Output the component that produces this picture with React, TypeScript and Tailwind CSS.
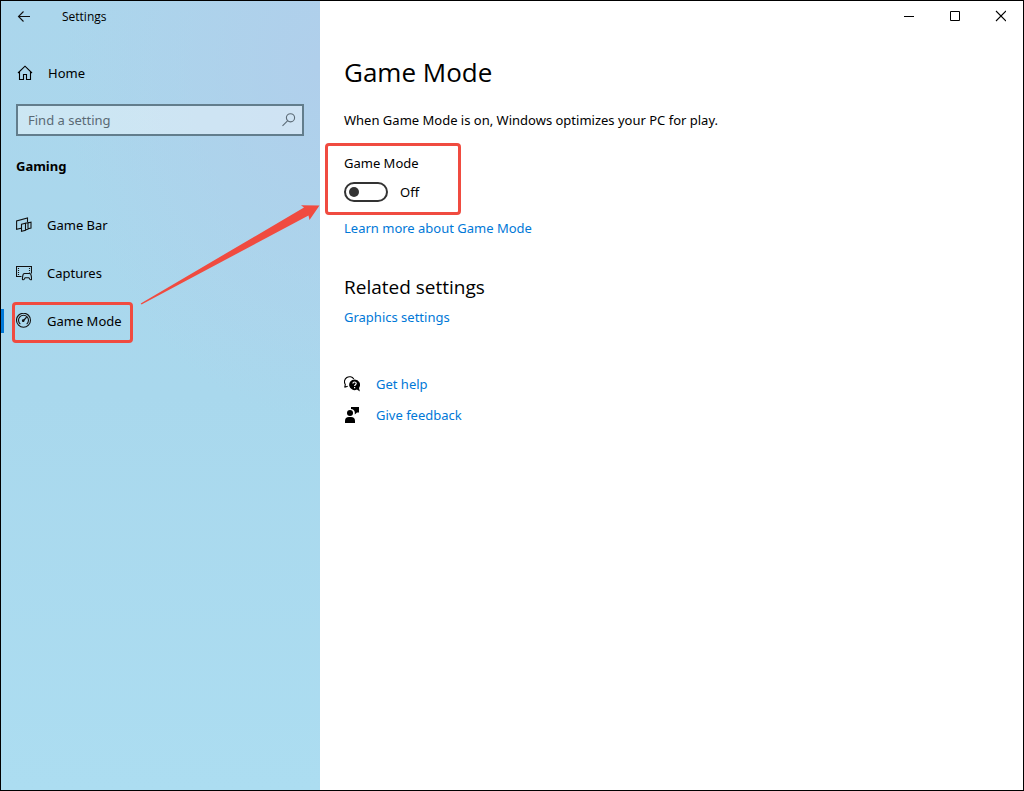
import type { ReactNode } from "react";

function BackIcon() {
  return (
    <svg className="size-4" viewBox="0 0 16 16" fill="none" stroke="#111" strokeWidth="1.1">
      <path d="M14 7.500H2.500M7.500 2.500l-5 5 5 5" />
    </svg>
  );
}

function HomeIcon() {
  return (
    <svg className="size-4" viewBox="0 0 16 16" fill="none" stroke="#000" strokeWidth="1.1">
      <path d="M1 8 8 1.200l7 6.800M2.500 7v7.500h4V9.500h3v5h4V7" />
    </svg>
  );
}

function SearchIcon() {
  return (
    <svg className="size-4" viewBox="0 0 16 16" fill="none" stroke="#5b6a75" strokeWidth="1.1">
      <circle cx="10.500" cy="5.800" r="4.100" />
      <path d="M7.500 8.800 2.500 13.800" />
    </svg>
  );
}

function GameBarIcon() {
  return (
    <svg className="size-4" viewBox="0 0 16 16" fill="none" stroke="#111" strokeWidth="1.1">
      <path d="M5 11.200.6 12.400V4L11.500 1v4M5.500 7.200l4-1v7l-4 1zM9.500 6.200l2.500-.6v6.600l-2.500.7M12 5.900l3-.7v5.800l-3 .8" />
    </svg>
  );
}

function CapturesIcon() {
  return (
    <svg className="size-4" viewBox="0 0 16 16" fill="none" stroke="#111" strokeWidth="1.1">
      <path d="M5.500 11.500H.5v-10h15v7" />
      <path d="M2.500 3v8M13.500 3v4.500" strokeDasharray="1 1" />
      <path d="M8.500 8.500h5c1.200 0 1.600 1.200 1.800 2.600l.3 2.600c.1 1.200-1.200 1.400-1.800.5l-.9-1.400H9.100l-.9 1.400c-.6.9-1.900.7-1.800-.5l.3-2.600c.2-1.400.6-2.600 1.800-2.600z" />
    </svg>
  );
}

function GaugeIcon() {
  return (
    <svg className="size-4" viewBox="0 0 16 16" fill="none" stroke="#111" strokeWidth="1.1">
      <circle cx="7.500" cy="7.200" r="7" />
      <path d="M4.300 11.100a5 5 0 1 1 6.400 0" />
      <path d="m7.300 7.700 3.300-3.600" strokeWidth="1.300" />
      <circle cx="7.200" cy="7.700" r=".8" fill="#111" />
    </svg>
  );
}

function HelpIcon() {
  return (
    <svg className="size-4" viewBox="0 0 16 16" fill="none">
      <path d="M.7 11.500 1.300 8.500A4.800 4.800 0 1 1 9.800 3M.7 11.300l3-1" stroke="#000" strokeWidth="1.100" />
      <path d="M10.500 3.500a5.300 5.300 0 1 0 2.400 10l3 2-.9-3.600a5.300 5.300 0 0 0-4.500-8.400z" fill="#000" />
      <path d="M8.900 7.600c0-2.100 3.300-2.100 3.300-.1 0 1.200-1.600 1.200-1.600 2.600M10.600 11v1.200" stroke="#fff" strokeWidth="1.200" />
    </svg>
  );
}

function FeedbackIcon() {
  return (
    <svg className="size-4" viewBox="0 0 16 16" fill="#000">
      <path d="M7 0h8v5.500h-2L10.800 7.500V5.500A4 4 0 0 0 7 2z" />
      <circle cx="6" cy="6" r="3" />
      <path d="M1 16v-2a4 4 0 0 1 4-4h2a4 4 0 0 1 4 4v2z" />
    </svg>
  );
}

const highlight = "pointer-events-none absolute rounded-sm border-3 border-[#f04b40]";

function NavItem({ icon, label, current = false }: { icon: ReactNode; label: string; current?: boolean }) {
  return (
    <li className="relative">
      <a href="#" aria-current={current ? "page" : undefined} className="flex h-12 items-center gap-[15px] pl-[15px]">
        {current && <span className="absolute left-0 h-6 w-[3px] bg-[#0078d7]" />}
        {icon}
        <span>{label}</span>
      </a>
      {current && <span className={`${highlight} top-[5px] left-[11px] h-[41px] w-[121px]`} />}
    </li>
  );
}

function Sidebar() {
  return (
    <aside className="relative w-[319px] shrink-0 bg-[radial-gradient(ellipse_80%_45%_at_100%_8%,#b0cfeb,transparent),linear-gradient(to_bottom,#abd6ec,#a9d8ed_50%,#acddf1)]">
      <header className="flex h-8 items-center gap-[30px] pl-[15px] font-['Open_Sans','Noto_Sans',sans-serif] text-xs">
        <button type="button" aria-label="Back"><BackIcon /></button>
        <span>Settings</span>
      </header>
      <a href="#" className="mt-4 flex h-12 items-center gap-[15px] pl-4"><HomeIcon /><span>Home</span></a>
      <label className="mr-4 ml-[15px] mt-[7px] flex h-8 items-center border-2 border-[#627d8c] bg-white/40 px-[6px]">
        <input type="text" aria-label="Find a setting" placeholder="Find a setting" className="min-w-0 flex-1 bg-transparent pl-1 outline-none placeholder:text-[#5a6a75]" />
        <SearchIcon />
      </label>
      <h2 className="mt-5 pl-[15px] leading-5 font-bold">Gaming</h2>
      <nav className="mt-[25px]">
        <ul>
          <NavItem icon={<GameBarIcon />} label="Game Bar" />
          <NavItem icon={<CapturesIcon />} label="Captures" />
          <NavItem icon={<GaugeIcon />} label="Game Mode" current />
        </ul>
      </nav>
      <svg className="pointer-events-none absolute top-[203px] left-[139px] h-[102px] w-[181px]" viewBox="140 204 181 102" fill="#f04b40">
        <path d="M140.700 303.500 304 207.500l-3-2.200 18.500.2-10 14.500-1-4.500-167 89z" />
      </svg>
    </aside>
  );
}

function WindowControls() {
  return (
    <div className="flex h-[30px] justify-end">
      <button type="button" aria-label="Minimize" className="flex w-[46px] items-center justify-center">
        <svg className="size-3" viewBox="0 0 12 12" stroke="#000"><path d="M2 6.500h10" /></svg>
      </button>
      <button type="button" aria-label="Maximize" className="flex w-[46px] items-center justify-center">
        <svg className="size-3" viewBox="0 0 12 12" fill="none" stroke="#000"><path d="M2.500 1.500h9v9h-9z" /></svg>
      </button>
      <button type="button" aria-label="Close" className="flex w-[46px] items-center justify-center">
        <svg className="size-3" viewBox="0 0 12 12" stroke="#000" strokeWidth="1.100"><path d="m2 1 10 10m0-10L2 11" /></svg>
      </button>
    </div>
  );
}

export default function App() {
  return (
    <div className="flex min-h-screen border border-black bg-white font-['Noto_Sans','Open_Sans',sans-serif] text-[13px] leading-5 text-black">
      <Sidebar />
      <main className="min-w-0 flex-1">
        <WindowControls />
        <div className="px-6">
          <h1 className="mt-[21px] font-['Open_Sans','Noto_Sans',sans-serif] text-[26px] leading-10">Game Mode</h1>
          <p className="mt-[18px]">When Game Mode is on, Windows optimizes your PC for play.</p>
          <section className="relative mt-[23px]">
            <span className={`${highlight} -top-[10px] -left-[19px] h-[72px] w-[136px]`} />
            <label htmlFor="game-mode" className="block">Game Mode</label>
            <div className="mt-[9px] flex items-center gap-3">
              <input id="game-mode" type="checkbox" role="switch" className="h-5 w-11 appearance-none rounded-full border-2 border-[#333] p-[3px] before:block before:size-[10px] before:rounded-full before:bg-[#333]" />
              <span>Off</span>
            </div>
          </section>
          <a href="#" className="mt-4 block w-fit text-[#0078d7]">Learn more about Game Mode</a>
          <h2 className="mt-[33px] font-['Open_Sans','Noto_Sans',sans-serif] text-[19px] leading-8">Related settings</h2>
          <a href="#" className="mt-1 block w-fit text-[#0078d7]">Graphics settings</a>
          <div className="mt-[47px] flex flex-col items-start gap-[11px] text-[#0078d7]">
            <a href="#" className="flex items-center gap-4"><HelpIcon />Get help</a>
            <a href="#" className="flex items-center gap-4"><FeedbackIcon />Give feedback</a>
          </div>
        </div>
      </main>
    </div>
  );
}
